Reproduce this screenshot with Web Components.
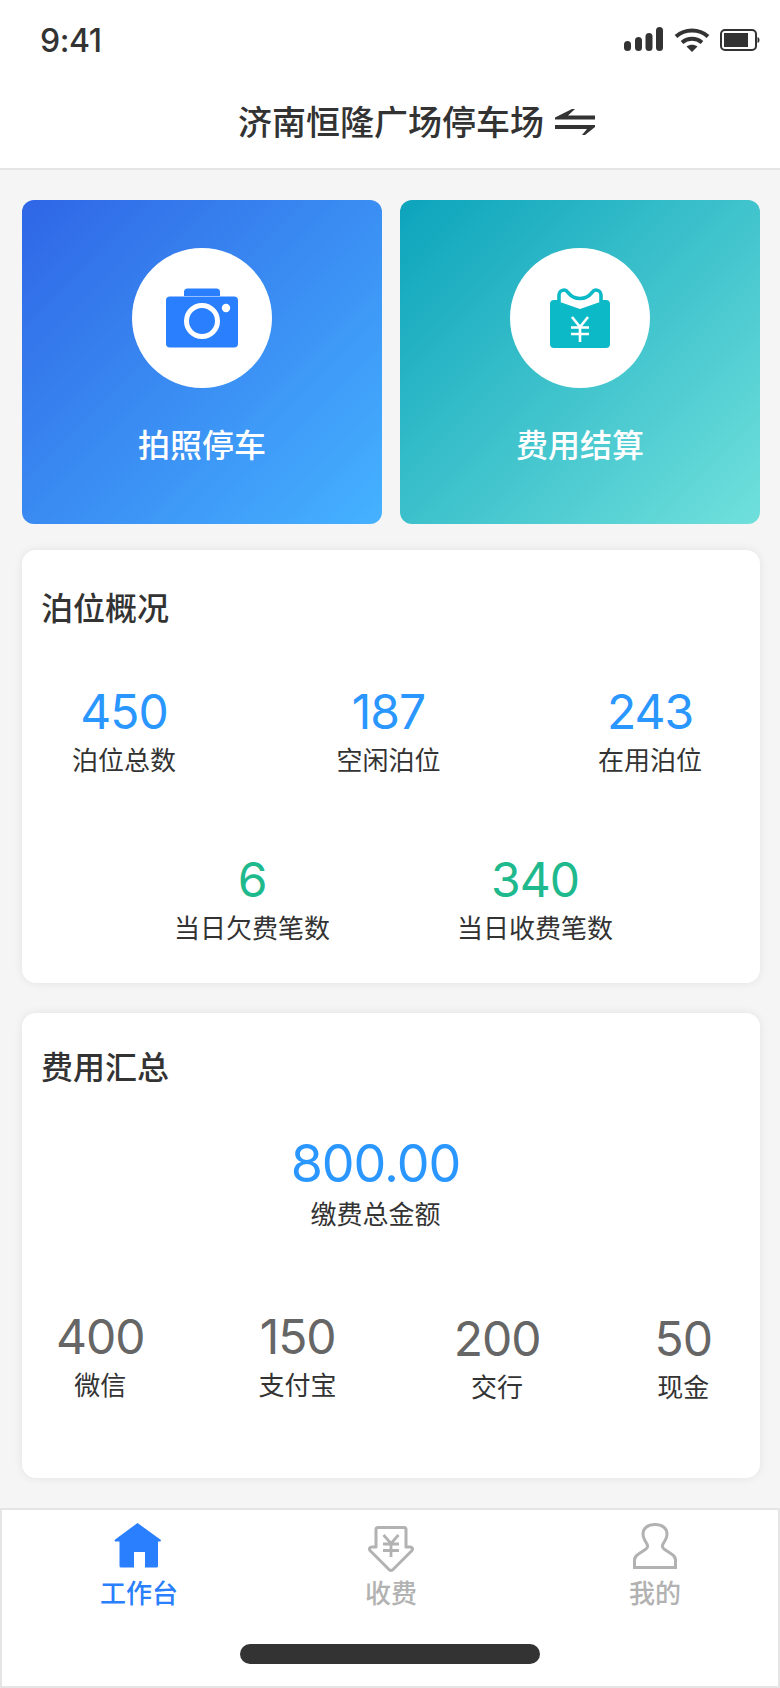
<!DOCTYPE html>
<html lang="zh"><head><meta charset="utf-8"><title>济南恒隆广场停车场</title>
<style>
html,body{margin:0;padding:0;background:#f5f5f5}
body{width:780px;height:1688px;overflow:hidden;font-family:"Noto Sans CJK SC","Inter",sans-serif;color:#333;display:flex;flex-direction:column}
</style></head><body>
<status-bar></status-bar>
<app-header>济南恒隆广场停车场</app-header>
<main-area>
  <action-row>
    <action-card label="拍照停车" kind="blue"><svg viewBox="0 0 72 60" width="72" height="60"><path fill="#2a7fff" d="M18 8V4a3.500 3.500 0 0 1 3.500-3.500h29A3.500 3.500 0 0 1 54 4v4z"/><rect y="8.500" width="72" height="51" rx="4" fill="#2a7fff"/><circle cx="36" cy="33" r="15.500" fill="none" stroke="#fff" stroke-width="5"/><circle cx="60" cy="20" r="4.200" fill="#fff"/></svg></action-card>
    <action-card label="费用结算" kind="teal"><svg viewBox="0 0 60 60" width="60" height="60"><path fill="#0cbac7" d="M4 12h4.500l1.500 2 20 7 20-7 1.500-2H56a4 4 0 0 1 4 4v40a4 4 0 0 1-4 4H4a4 4 0 0 1-4-4V16a4 4 0 0 1 4-4z"/><path fill="none" stroke="#0cbac7" stroke-width="3.600" d="M9 14V7c0-3 2.500-5 5.500-5 4 0 4 8.500 15.500 8.500S41.500 2 45.500 2c3 0 5.500 2 5.500 5v7"/><path fill="none" stroke="#fff" stroke-width="2.600" d="M22 29l8 10 8-10M21 39.500h18M21 46h18M30 39v15"/></svg></action-card>
  </action-row>
  <info-card heading="泊位概况" class="berth">
    <stat-row style="--pad:0 58px 0 50px;--justify:space-between;--top:55px">
      <stat-item value="450" color="#2a96ff">泊位总数</stat-item>
      <stat-item value="187" color="#2a96ff" style="margin-left:3px">空闲泊位</stat-item>
      <stat-item value="243" color="#2a96ff">在用泊位</stat-item>
    </stat-row>
    <stat-row style="--pad:0 147px 0 152px;--justify:space-between;--top:74px">
      <stat-item value="6" color="#1fb98e">当日欠费笔数</stat-item>
      <stat-item value="340" color="#1fb98e">当日收费笔数</stat-item>
    </stat-row>
  </info-card>
  <info-card heading="费用汇总" class="fee">
    <stat-row style="--pad:0 31px 0 0;--justify:center;--top:48px;--num:52px;--gap:2px">
      <stat-item value="800.00" color="#2a96ff">缴费总金额</stat-item>
    </stat-row>
    <stat-row style="--pad:0 48px 0 34px;--justify:space-between;--top:77px">
      <stat-item value="400" color="#666">微信</stat-item>
      <stat-item value="150" color="#666">支付宝</stat-item>
      <stat-item value="200" color="#666" style="margin:2px 0 0 3px">交行</stat-item>
      <stat-item value="50" color="#666" style="margin-top:2px">现金</stat-item>
    </stat-row>
  </info-card>
</main-area>
<tab-bar></tab-bar>
<script>
function def(name, css, html, init){
  customElements.define(name, class extends HTMLElement{
    connectedCallback(){
      if(this.shadowRoot) return;
      const r=this.attachShadow({mode:'open'});
      r.innerHTML='<style>'+css+'</style>'+(typeof html==='function'?html(this):html);
      if(init) init(this,r);
    }
  });
}
def('status-bar',`
:host{display:flex;height:84px;box-sizing:border-box;background:#fff;align-items:center;justify-content:space-between;padding:0 20px 4px 40px;flex:none}
.t{font:500 32px/1 "Inter","Liberation Sans",sans-serif;color:#333;letter-spacing:-.4px;position:relative;top:1px}
.i{display:flex;align-items:center;gap:10px}
`,`<span class="t">9:41</span><span class="i">
<svg width="40" height="26" viewBox="0 0 40 26" fill="#333"><rect x="0" y="14" width="7" height="10" rx="3.500"/><rect x="11" y="10" width="7" height="14" rx="3.500"/><rect x="21.500" y="6" width="7" height="18" rx="3.500"/><rect x="32" y="0" width="7" height="24" rx="3.500"/></svg>
<svg width="36" height="26" viewBox="0 0 36 26"><path fill="none" stroke="#333" stroke-width="4" d="M2 9.500C11 1.500 25 1.500 34 9.500M8 15.500c6-5 14-5 20 0"/><path fill="#333" d="M12.500 19.500c3.500-2.500 7.500-2.500 11 0L18 25z"/></svg>
<svg width="40" height="24" viewBox="0 0 40 24"><rect x="1" y="2" width="35" height="20" rx="4" fill="none" stroke="#333" stroke-width="2"/><rect x="4" y="5" width="24" height="14" fill="#333"/><path d="M37.500 9c1.500.5 2 1.500 2 3s-.5 2.500-2 3z" fill="#333"/></svg>
</span>`);
def('app-header',`
:host{display:flex;height:86px;box-sizing:border-box;background:#fff;border-bottom:2px solid #e5e5e5;align-items:center;justify-content:center;gap:10px;flex:none;padding:0 0 10px 54px}
.t{font:500 34px/1.2 "Noto Sans CJK SC",sans-serif;color:#333}
`,`<span class="t"><slot></slot></span><svg width="42" height="26" viewBox="0 0 42 26" fill="#333" style="position:relative;top:1px"><path d="M18 0h3L14 6.500h27v4H1V8.500z"/><path d="M1 16h40v2L31 26h-3l5-6H1z"/></svg>`);
def('main-area',`:host{display:flex;flex-direction:column;flex:1;padding:30px 20px 0 22px;box-sizing:border-box}`,`<slot></slot>`);
def('action-row',`:host{display:flex;gap:18px;height:324px}`,`<slot></slot>`);
def('action-card',`
:host{display:flex;flex:1;flex-direction:column;align-items:center;border-radius:12px;color:#fff;padding-top:48px;box-sizing:border-box}
:host([kind=blue]){background:linear-gradient(135deg,#2f66e6,#45b2ff)}
:host([kind=teal]){background:linear-gradient(135deg,#0ca4bc,#70e0dc)}
.c{width:140px;height:140px;border-radius:50%;background:#fff;display:flex;align-items:center;justify-content:center}
.l{font:500 32px/44px "Noto Sans CJK SC",sans-serif;margin-top:33px}
`,h=>`<div class="c"><slot></slot></div><div class="l">${h.getAttribute('label')}</div>`);
def('info-card',`
:host{display:block;background:#fff;border-radius:14px;box-shadow:0 0 10px rgba(0,0,0,.08);box-sizing:border-box;padding-top:34px}
:host(.berth){height:433px;margin-top:26px}
:host(.fee){height:465px;margin-top:30px}
:host(.fee) .h{margin-top:-4px}
.h{font:500 32px/44px "Noto Sans CJK SC",sans-serif;color:#333;padding-left:19px}
`,h=>`<div class="h">${h.getAttribute('heading')}</div><slot></slot>`);
def('stat-row',`:host{display:flex;padding:var(--pad);justify-content:var(--justify);margin-top:var(--top)}`,`<slot></slot>`);
def('stat-item',`
:host{display:flex;flex-direction:column;align-items:center}
.n{font:430 var(--num,48px)/58px "Inter","Liberation Sans",sans-serif;letter-spacing:-1px;margin-bottom:var(--gap,0)}
.l{font:400 26px/36px "Noto Sans CJK SC",sans-serif;color:#333}
`,h=>`<div class="n" style="color:${h.getAttribute('color')}">${h.getAttribute('value')}</div><div class="l"><slot></slot></div>`);
def('tab-bar',`
:host{display:flex;flex-direction:column;height:180px;box-sizing:border-box;flex:none;background:#fff;border:2px solid #e5e5e5;margin-top:auto;align-items:stretch}
.r{display:flex;padding-top:13px;height:118px;box-sizing:border-box}
.it{display:flex;flex-direction:column;align-items:center;font:500 26px/30px "Noto Sans CJK SC",sans-serif;color:#b2b2b2}
.it svg{display:block;height:46px;margin-bottom:8px}
.a{color:#2a7fff;margin-left:98px;width:78px}
.b{margin-left:187px;width:52px}
.c{margin-left:212px;width:52px}
.pill{width:300px;height:20px;border-radius:10px;background:#333;margin:16px auto 0}
`,`<div class="r">
<div class="it a"><svg width="48" viewBox="0 0 48 46" style="margin-right:3px"><path fill="#2a7fff" d="M23.500 0L47 17l-.5 1.500H44V43a1.500 1.500 0 0 1-1.500 1.500H31V29H20v15.500H7A1.500 1.500 0 0 1 5.500 43V18.500H1L.5 17z"/></svg>工作台</div>
<div class="it b"><svg width="46" viewBox="0 0 46 46" style="margin-top:3px;margin-bottom:5px"><path fill="none" stroke="#b2b2b2" stroke-width="3" stroke-linejoin="round" d="M10 1.500h26a2 2 0 0 1 2 2V21h4c2.500 0 3 2 2 3.500L25 43.500c-1 1.200-3 1.200-4 0L2 24.500C1 23 1.500 21 4 21h4V3.500a2 2 0 0 1 2-2z"/><path fill="none" stroke="#b2b2b2" stroke-width="2.800" d="M15.500 9l7.500 8.500L30.500 9M15 18h16M15 24.500h16M23 17.500V31"/></svg>收费</div>
<div class="it c"><svg width="44" viewBox="0 0 44 46"><path fill="none" stroke="#b2b2b2" stroke-width="3" d="M1.500 44.500V37c0-3 1.500-4.500 4-6l7.500-5c2-1.500 2-3 1-5-2-3-4-6-4-10C10 5 15 1.500 22 1.500S34 5 34 11c0 4-2 7-4 10-1 2-1 3.500 1 5l7.500 5c2.500 1.500 4 3 4 6v7.500z"/></svg>我的</div>
</div><div class="pill"></div>`);
</script>
</body></html>
